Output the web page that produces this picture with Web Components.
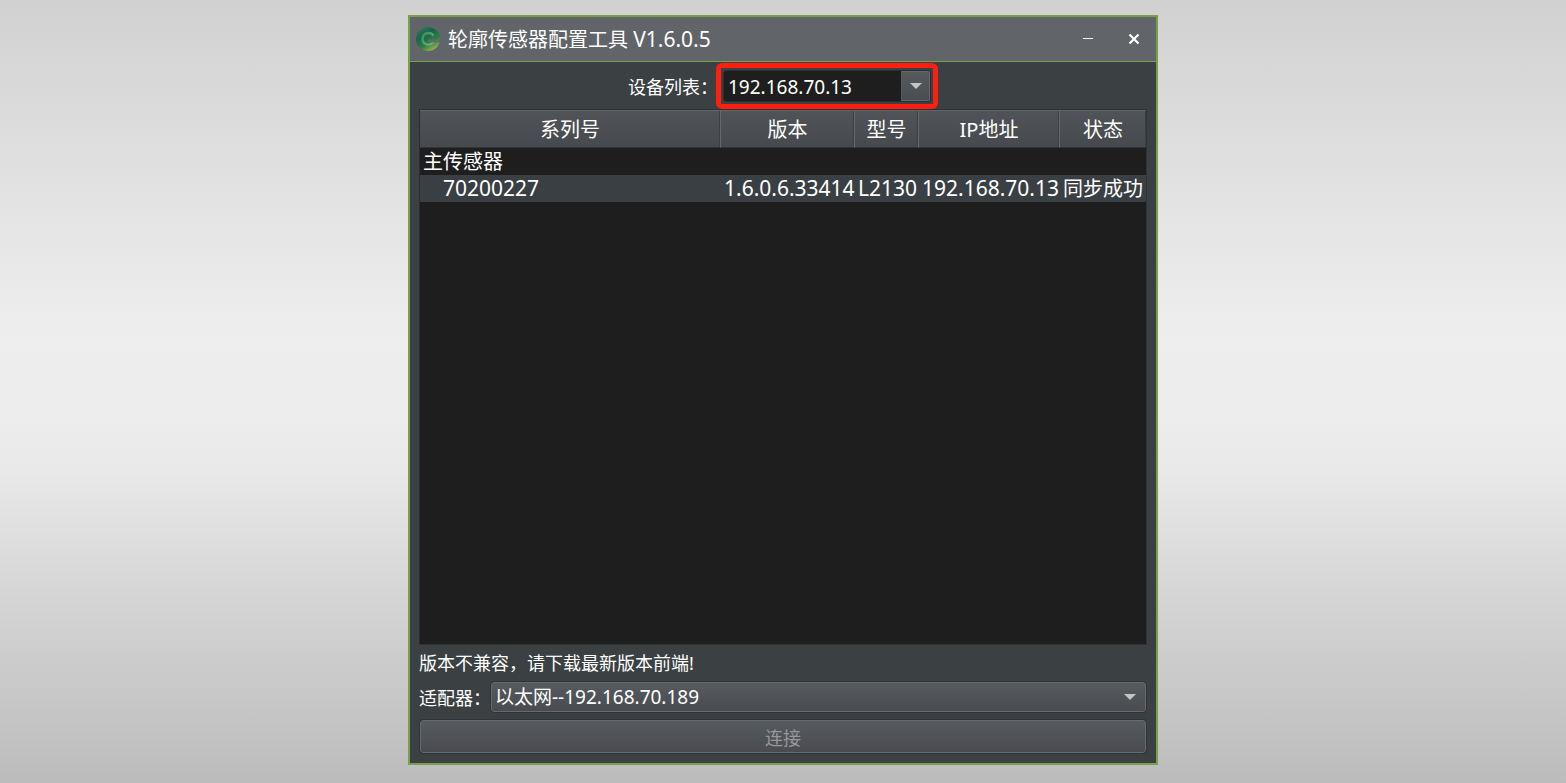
<!DOCTYPE html>
<html lang="zh-CN">
<head>
<meta charset="utf-8">
<title>轮廓传感器配置工具</title>
<style>
  body {
    margin: 0; min-height: 100vh; box-sizing: border-box; padding: 15px 16px 18px;
    display: flex; justify-content: center;
    background: linear-gradient(#d1d1d1, #e6e6e6 30%, #eeeeee 43%, #ededed 52%, #e9e9e9 60%, #d5d5d5 76%, #bcbcbc);
    font-family: "Noto Sans", "Noto Sans CJK SC", sans-serif;
    color: #fff;
  }
</style>
</head>
<body>
<tool-window>
  <title-bar slot="title">轮廓传感器配置工具 <span>V1.6.0.5</span></title-bar>
  <device-picker></device-picker>
  <sensor-table></sensor-table>
  <adapter-form></adapter-form>
</tool-window>

<script>
class BaseElement extends HTMLElement {
  connectedCallback() {
    if (!this.shadowRoot) this.attachShadow({ mode: 'open' }).innerHTML = this.constructor.markup;
  }
}

customElements.define('tool-window', class extends BaseElement {
  static markup = `
    <style>
      :host { display: flex; flex-direction: column; flex: 1; max-width: 750px; box-sizing: border-box;
        border: 2px solid #76a04a; background: #3b4043; }
      main { flex: 1; display: flex; flex-direction: column; padding: 1px 9px 10px; }
    </style>
    <slot name="title"></slot>
    <main><slot></slot></main>`;
});

customElements.define('title-bar', class extends BaseElement {
  static markup = `
    <style>
      :host { display: flex; align-items: center; height: 44px; padding: 0 9px 0 5px;
        background: #616469; border-bottom: 1px solid #76a04a; font-size: 20px; }
      h1 { flex: 1; margin: 0 0 0 7px; padding-top: 1px; font: inherit; line-height: 28px; }
      ::slotted(span) { font-size: 21px; }
      svg { display: block; }
      button { display: grid; place-items: center; width: 26px; height: 26px; margin-left: 20px;
        padding: 0; border: 0; background: none; color: #fff; }
    </style>
    <svg width="26" height="26" viewBox="0 0 26 26" aria-hidden="true">
      <defs>
        <linearGradient id="g" x1="0" y1="0" x2=".6" y2="1">
          <stop offset="0" stop-color="#38805c"/><stop offset=".4" stop-color="#18654a"/>
          <stop offset=".75" stop-color="#2f7f45"/><stop offset="1" stop-color="#8fae4c"/>
        </linearGradient>
        <linearGradient id="c" x1="0" y1="0" x2="1" y2="1">
          <stop offset="0" stop-color="#3d8c61"/><stop offset="1" stop-color="#78ae7a"/>
        </linearGradient>
      </defs>
      <circle cx="13" cy="13" r="12" fill="url(#g)"/>
      <path d="M18.500 9.500C15.500 5.200 7.800 6.700 7.500 12.500C7.400 18.800 14.400 20.600 18.500 16" fill="none" stroke="url(#c)" stroke-width="2.400"/>
      <path d="M13 13.600H26V16.200H15.500C14 16.200 12.600 15.500 13 13.600Z" fill="#616c68"/>
    </svg>
    <h1><slot></slot></h1>
    <button type="button" aria-label="最小化"><svg width="10" height="10"><path d="M0 4.500H10" stroke="currentColor"/></svg></button>
    <button type="button" aria-label="关闭"><svg width="12" height="12"><path d="M1.500 1.500L10.500 10.500M10.500 1.500L1.500 10.500" stroke="currentColor" stroke-width="2.200"/></svg></button>`;
});

customElements.define('device-picker', class extends BaseElement {
  static markup = `
    <style>
      :host { display: flex; justify-content: center; align-items: center; height: 46px; font-size: 18px; }
      label { width: 88px; white-space: nowrap; }
      .frame { box-sizing: border-box; width: 222px; height: 46px; padding: 2px; border: 5px solid #ff1f10; border-radius: 6px; }
      .box { position: relative; height: 30px; border: 1px solid #2b2d30; border-radius: 3px; background: #1e1e1e; overflow: hidden; }
      select { appearance: none; width: 100%; height: 32px; padding: 0 34px 0 4px; border: 0; margin: 0;
        background: none; color: inherit; font: inherit; font-size: 19px; position: relative; outline: 0; }
      .arrow { position: absolute; right: 0; top: 0; width: 27px; height: 28px; display: grid; place-items: center;
        border: 1px solid #65696d; border-left-color: #55595d; background: linear-gradient(#565a5e, #494c50); }
    </style>
    <label for="device">设备列表：</label>
    <div class="frame"><div class="box">
      <span class="arrow"><svg width="12" height="6"><path d="M0 0H12L6 6Z" fill="#c4c4c4"/></svg></span>
      <select id="device"><option>192.168.70.13</option></select>
    </div></div>`;
});

customElements.define('sensor-table', class extends BaseElement {
  static markup = `
    <style>
      :host { display: block; flex: 1; background: #1e1e1e; border: 1px solid #2f3236; border-left-color: #2b2e31; font-size: 20px; }
      table { width: 100%; border-collapse: separate; border-spacing: 0; table-layout: fixed; }
      th, td { box-sizing: border-box; padding: 0; font-weight: 400; white-space: nowrap; }
      th { height: 38px; line-height: 34px; padding-top: 2px; border-top: 1px solid #606468; border-bottom: 1px solid #303337;
        border-left: 1px solid #65696d; background: linear-gradient(#505458, #46494d); box-shadow: inset -1px 0 #3d4043; }
      th:first-child { border-left: 0; }
      td { height: 27px; line-height: 27px; padding-left: 4px; text-align: left; }
      .group td { padding-left: 3px; }
      .sensor td { background: #3a3f44; font-size: 21px; }
      .sensor td:first-child { padding-left: 23px; }
      .sensor td:last-child { font-size: 20px; }
    </style>
    <table>
      <colgroup><col><col style="width:134px"><col style="width:64px"><col style="width:141px"><col style="width:87px"></colgroup>
      <thead><tr><th>系列号</th><th>版本</th><th>型号</th><th>IP地址</th><th>状态</th></tr></thead>
      <tbody>
        <tr class="group"><td colspan="5">主传感器</td></tr>
        <tr class="sensor"><td>70200227</td><td>1.6.0.6.33414</td><td>L2130</td><td>192.168.70.13</td><td>同步成功</td></tr>
      </tbody>
    </table>`;
});

customElements.define('adapter-form', class extends BaseElement {
  static markup = `
    <style>
      :host { display: block; font-size: 18px; }
      p { margin: 0; height: 37px; line-height: 37px; }
      .row { display: flex; align-items: center; }
      .box { flex: 1; position: relative; margin-right: 1px; }
      select, button { display: block; box-sizing: border-box; width: 100%; margin: 0; font: inherit;
        border: 1px solid #666a6e; border-radius: 3px; outline: 1px solid #303337;
        background: linear-gradient(#565b5f, #494b50); }
      select { appearance: none; height: 30px; padding: 0 34px 0 3px; color: inherit; font-size: 19px; }
      svg { position: absolute; right: 10px; top: 12px; }
      .action { padding: 8px 1px 0; }
      button { height: 33px; padding: 0; color: #96989b; }
    </style>
    <p>版本不兼容，请下载最新版本前端!</p>
    <div class="row">
      <label for="adapter">适配器：</label>
      <div class="box">
        <select id="adapter"><option>以太网--192.168.70.189</option></select>
        <svg width="12" height="6"><path d="M0 0H12L6 6Z" fill="#c4c4c4"/></svg>
      </div>
    </div>
    <div class="action"><button type="button" disabled>连接</button></div>`;
});
</script>
</body>
</html>
